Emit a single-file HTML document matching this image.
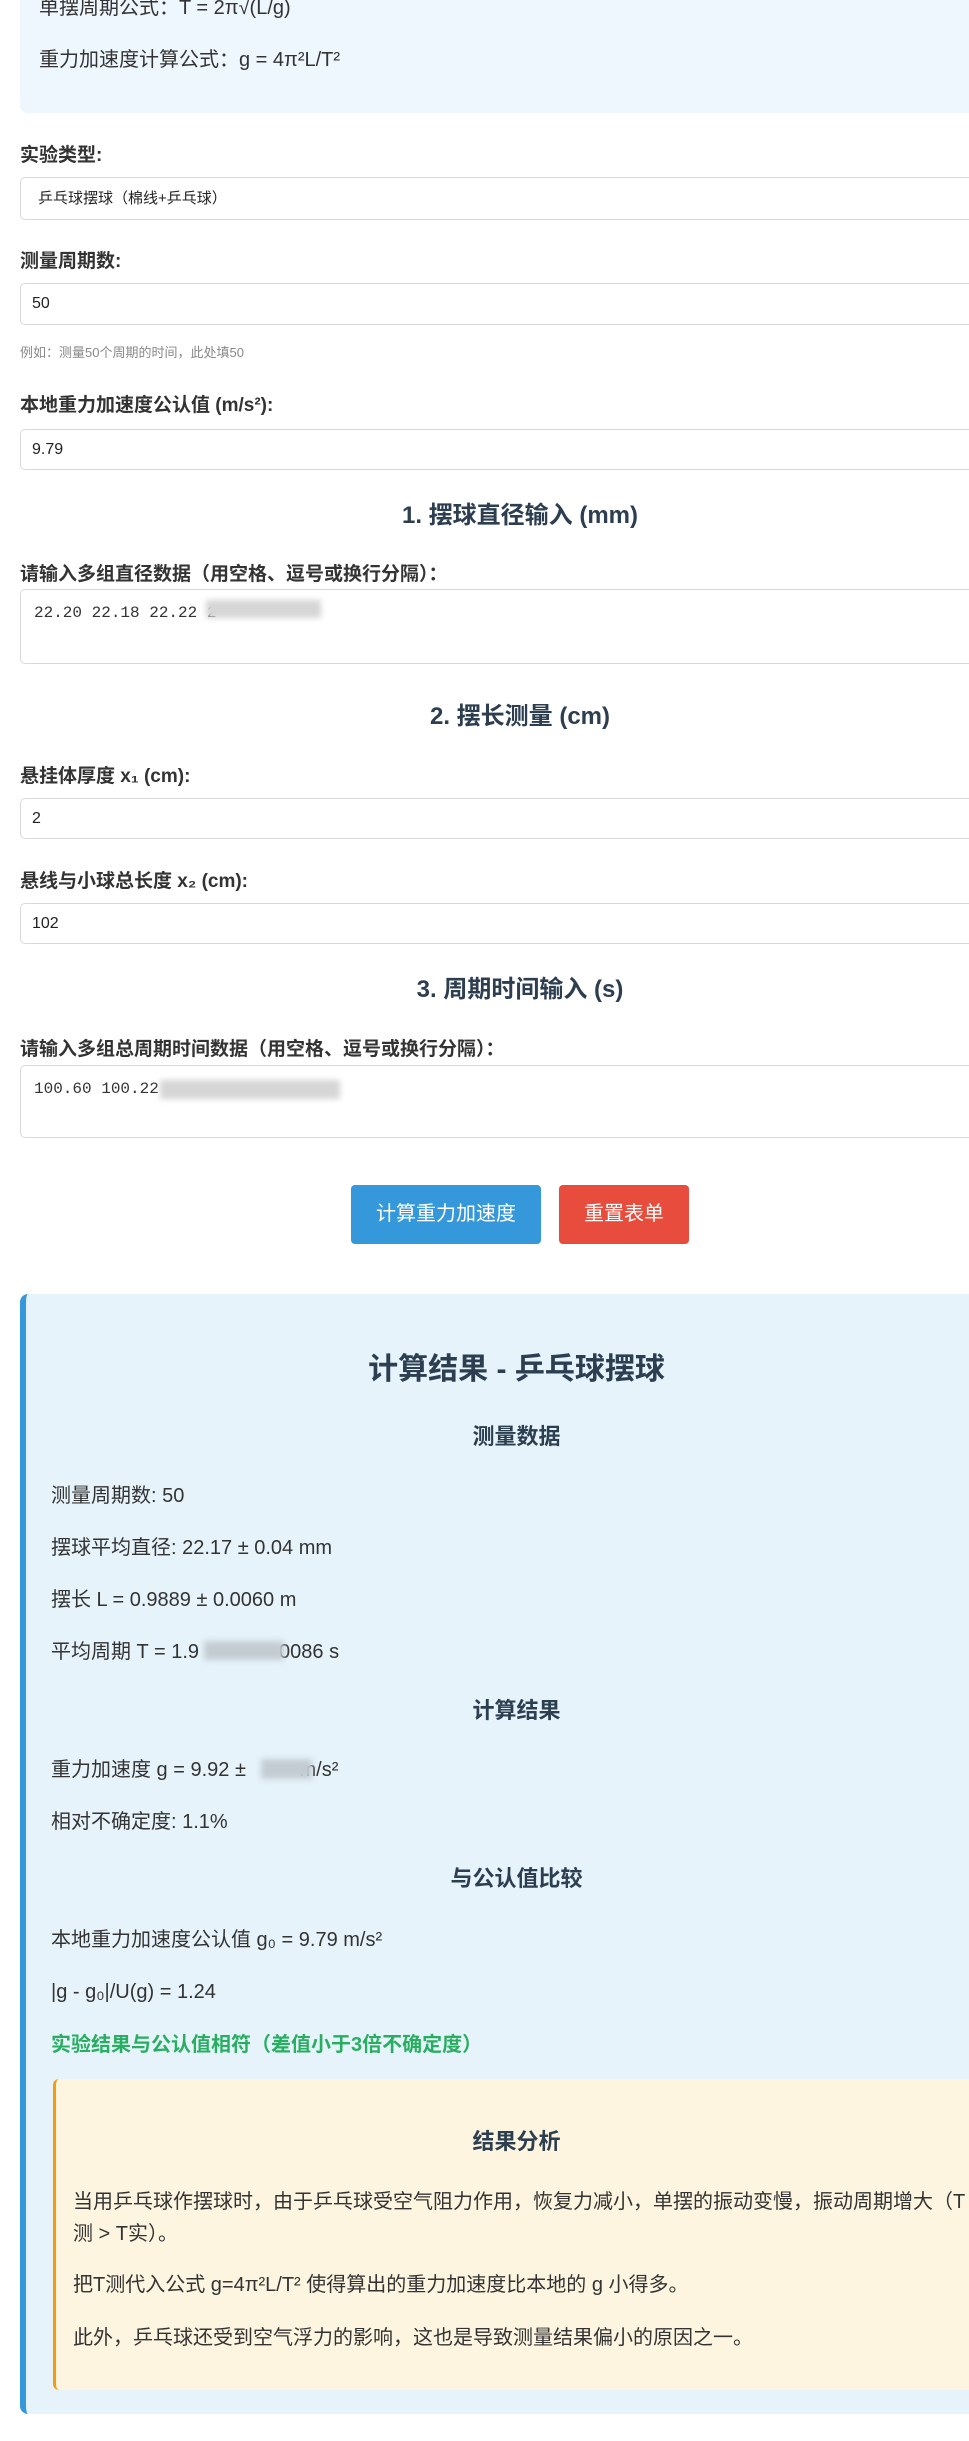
<!DOCTYPE html>
<html><head><meta charset="utf-8">
<style>
html,body{margin:0;padding:0;width:969px;height:2441px;overflow:hidden;background:#fff;}
body{position:relative;font-family:"Liberation Sans","Noto Sans CJK SC",sans-serif;color:#333;}
.a{position:absolute;white-space:nowrap;}
.lbl{left:20px;font-size:19px;font-weight:bold;line-height:26px;color:#333;}
.inp{left:20px;width:1000px;border:1px solid #d9d9d9;border-radius:5px;box-sizing:border-box;background:#fff;font-size:16px;color:#222;}
.h3{left:20px;width:1000px;text-align:center;font-size:24px;font-weight:bold;line-height:32px;color:#2c3e50;}
.blur{position:absolute;background:#d6d6d6;filter:blur(3px);}
.rp{left:51px;font-size:20px;line-height:30px;color:#333;}
.rh{left:20px;width:993px;text-align:center;font-weight:bold;color:#2c3e50;}
.mono{font-family:"Liberation Mono","Noto Sans CJK SC",monospace;font-size:16px;color:#333;}
</style></head><body>

<div class="a" style="left:20px;top:-20px;width:1000px;height:133px;background:#eef6fe;border-radius:8px;"></div>
<div class="a" style="left:39px;top:-7px;font-size:20px;line-height:30px;">单摆周期公式：T = 2π√(L/g)</div>
<div class="a" style="left:39px;top:45px;font-size:20px;line-height:30px;">重力加速度计算公式：g = 4π²L/T²</div>

<div class="a lbl" style="top:143px;">实验类型:</div>
<div class="a inp" style="top:177px;height:43px;line-height:41px;padding-left:17px;font-size:15px;">乒乓球摆球（棉线+乒乓球）</div>

<div class="a lbl" style="top:249px;">测量周期数:</div>
<div class="a inp" style="top:283px;height:42px;line-height:40px;padding-left:11px;">50</div>
<div class="a" style="left:20px;top:344px;font-size:13px;line-height:18px;color:#888;">例如：测量50个周期的时间，此处填50</div>

<div class="a lbl" style="top:393px;">本地重力加速度公认值 (m/s²):</div>
<div class="a inp" style="top:429px;height:41px;line-height:39px;padding-left:11px;">9.79</div>

<div class="a h3" style="top:500px;">1. 摆球直径输入 (mm)</div>
<div class="a lbl" style="top:562px;">请输入多组直径数据（用空格、逗号或换行分隔）：</div>
<div class="a inp" style="top:589px;height:75px;"></div>
<div class="a mono" style="left:34px;top:602px;line-height:22px;">22.20 22.18 22.22 2</div>
<div class="blur" style="left:206px;top:600px;width:115px;height:18px;"></div>

<div class="a h3" style="top:701px;">2. 摆长测量 (cm)</div>
<div class="a lbl" style="top:764px;">悬挂体厚度 x₁ (cm):</div>
<div class="a inp" style="top:798px;height:41px;line-height:39px;padding-left:11px;">2</div>
<div class="a lbl" style="top:869px;">悬线与小球总长度 x₂ (cm):</div>
<div class="a inp" style="top:903px;height:41px;line-height:39px;padding-left:11px;">102</div>

<div class="a h3" style="top:974px;">3. 周期时间输入 (s)</div>
<div class="a lbl" style="top:1037px;">请输入多组总周期时间数据（用空格、逗号或换行分隔）：</div>
<div class="a inp" style="top:1065px;height:73px;"></div>
<div class="a mono" style="left:34px;top:1078px;line-height:22px;">100.60 100.22</div>
<div class="blur" style="left:160px;top:1080px;width:180px;height:19px;"></div>

<div class="a" style="left:351px;top:1185px;width:190px;height:59px;background:#3498db;border-radius:4px;color:#fff;font-size:20px;line-height:59px;text-align:center;">计算重力加速度</div>
<div class="a" style="left:559px;top:1185px;width:130px;height:59px;background:#e74c3c;border-radius:4px;color:#fff;font-size:20px;line-height:59px;text-align:center;">重置表单</div>

<div class="a" style="left:20px;top:1294px;width:993px;height:1120px;background:#e6f3fb;border-left:6px solid #3498db;border-radius:8px;box-sizing:border-box;"></div>
<div class="a rh" style="top:1350px;font-size:30px;line-height:40px;">计算结果 - 乒乓球摆球</div>
<div class="a rh" style="top:1422px;font-size:22px;line-height:30px;">测量数据</div>
<div class="a rp" style="top:1481px;">测量周期数: 50</div>
<div class="a rp" style="top:1533px;">摆球平均直径: 22.17 ± 0.04 mm</div>
<div class="a rp" style="top:1585px;">摆长 L = 0.9889 ± 0.0060 m</div>
<div class="a rp" style="top:1637px;">平均周期 T = 1.9<span style="display:inline-block;width:80px;"></span>0086 s</div>
<div class="blur" style="left:204px;top:1641px;width:80px;height:19px;background:#c4ccd3;"></div>
<div class="a rh" style="top:1696px;font-size:22px;line-height:30px;">计算结果</div>
<div class="a rp" style="top:1755px;">重力加速度 g = 9.92 ± <span style="display:inline-block;width:48px;"></span>m/s²</div>
<div class="blur" style="left:261px;top:1759px;width:51px;height:20px;background:#c4ccd3;"></div>
<div class="a rp" style="top:1807px;">相对不确定度: 1.1%</div>
<div class="a rh" style="top:1864px;font-size:22px;line-height:30px;">与公认值比较</div>
<div class="a rp" style="top:1925px;">本地重力加速度公认值 g₀ = 9.79 m/s²</div>
<div class="a rp" style="top:1977px;">|g - g₀|/U(g) = 1.24</div>
<div class="a rp" style="top:2030px;color:#27ae60;font-weight:bold;">实验结果与公认值相符（差值小于3倍不确定度）</div>

<div class="a" style="left:53px;top:2079px;width:927px;height:311px;background:#fdf5e0;border-left:3px solid #f39c12;border-radius:6px;box-sizing:border-box;"></div>
<div class="a" style="left:53px;width:927px;top:2127px;text-align:center;font-size:22px;font-weight:bold;line-height:30px;color:#2c3e50;">结果分析</div>
<div class="a" style="left:73px;top:2186px;font-size:20px;line-height:32px;">当用乒乓球作摆球时，由于乒乓球受空气阻力作用，恢复力减小，单摆的振动变慢，振动周期增大（T<br>测 &gt; T实）。</div>
<div class="a" style="left:73px;top:2269px;font-size:20px;line-height:32px;">把T测代入公式 g=4π²L/T² 使得算出的重力加速度比本地的 g 小得多。</div>
<div class="a" style="left:73px;top:2322px;font-size:20px;line-height:32px;">此外，乒乓球还受到空气浮力的影响，这也是导致测量结果偏小的原因之一。</div>

</body></html>
